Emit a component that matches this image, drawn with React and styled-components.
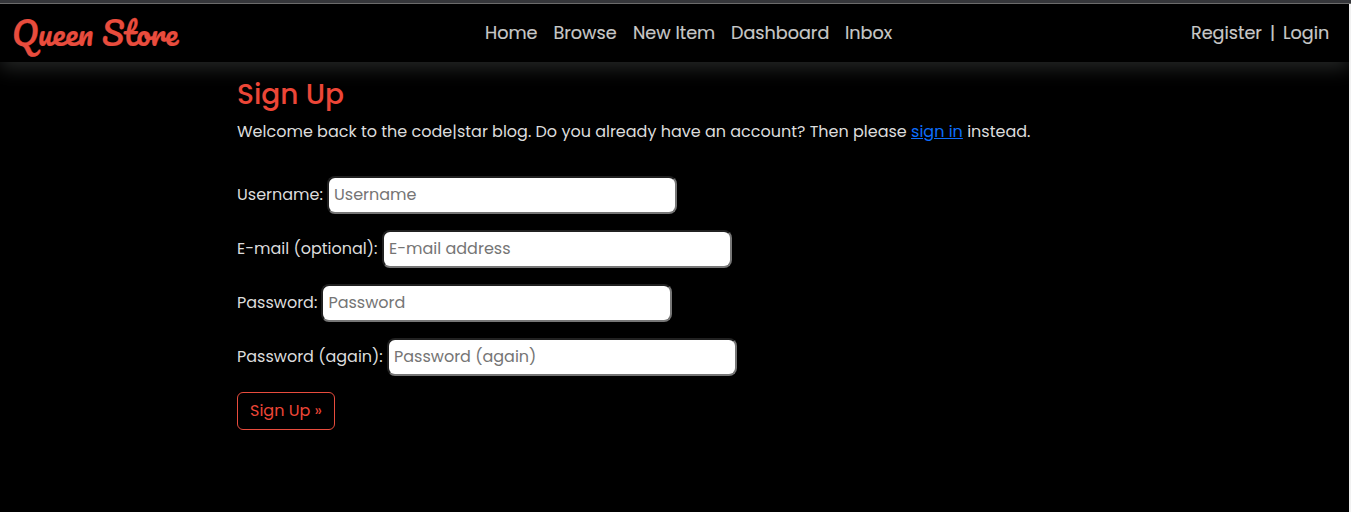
import React from "react";
import styled, { createGlobalStyle } from "styled-components";

const GlobalStyle = createGlobalStyle`
  * { box-sizing: border-box; }
  body {
    margin: 0;
    background: #000;
    color: #dcdcdc;
    font: 400 16px/24px Poppins, Inter, sans-serif;
    overflow: hidden;
  }
`;

const Page = styled.div`
  height: 512px;
  background: #000;
  display: flex;
  flex-direction: column;
`;

const TopEdge = styled.div`
  flex: none;
  height: 4px;
  background: #35363a;
  border-bottom: 1px solid #6b6b6b;
`;

const Body = styled.div`
  flex: 1;
  border-right: 2px solid #f1f1f1;
  overflow: hidden;
`;

const Header = styled.header`
  height: 58px;
  padding: 0 19px 0 12px;
  display: grid;
  grid-template-columns: 473px 1fr auto;
  align-items: center;
  background: #000;
  box-shadow: 0 6px 18px rgba(84, 88, 86, 0.45);
`;

const Logo = styled.a`
  padding-bottom: 2px;
  color: #e84c3d;
  font: 400 32px/56px Pacifico, "Liberation Serif", cursive;
  -webkit-text-stroke: 0.2px currentColor;
  white-space: nowrap;
`;

const Nav = styled.nav`
  display: flex;
  gap: 16px;
`;

const NavLink = styled.a`
  width: ${(p) => p.$width}px;
  color: #c8c8c8;
  font-size: 17.6px;
  line-height: 26px;
  -webkit-text-stroke: 0.15px currentColor;
  white-space: nowrap;
`;

const Account = styled.div`
  display: flex;
  gap: 8px;
`;

const Main = styled.main`
  padding: 16px 0 0 237px;
`;

const Title = styled.h1`
  margin: 0 0 8px;
  color: #ec4637;
  font-size: 28px;
  font-weight: 500;
  line-height: 34px;
`;

const Intro = styled.p`
  margin: 0 0 32px;
  white-space: nowrap;
`;

const Link = styled.a`
  color: #0d6efd;
  text-decoration: underline;
`;

const Field = styled.div`
  height: 38px;
  margin-bottom: 16px;
  display: flex;
  align-items: center;
`;

const Label = styled.label`
  width: ${(p) => p.$width}px;
  white-space: nowrap;
`;

const Input = styled.input`
  width: ${(p) => p.$width || 350}px;
  height: 38px;
  padding: 0 5px 2px;
  border: 2px solid;
  border-color: #212121 #767676 #767676 #212121;
  border-radius: 8px;
  background: #fff;
  font: inherit;
  &::placeholder { color: #757575; opacity: 1; }
`;

const Button = styled.button`
  width: 98px;
  height: 38px;
  padding: 0;
  border: 1px solid #e84c3d;
  border-radius: 6px;
  background: transparent;
  color: #ec4637;
  font: inherit;
`;

const links = [
  { text: "Home", width: 52.5 },
  { text: "Browse", width: 63.5 },
  { text: "New Item", width: 82 },
  { text: "Dashboard", width: 98 },
  { text: "Inbox", width: 48 },
];

const fields = [
  { label: "Username:", hint: "Username", width: 90 },
  { label: "E-mail (optional):", hint: "E-mail address", width: 145 },
  { label: "Password:", hint: "Password", width: 84.4, inputWidth: 350.6 },
  { label: "Password (again):", hint: "Password (again)", width: 150 },
];

export default function App() {
  return (
    <Page>
      <GlobalStyle />
      <TopEdge />
      <Body>
        <Header>
          <Logo>Queen Store</Logo>
          <Nav>
            {links.map((l) => (
              <NavLink key={l.text} $width={l.width}>{l.text}</NavLink>
            ))}
          </Nav>
          <Account>
            <NavLink $width={71}>Register</NavLink>
            <NavLink $width={5}>|</NavLink>
            <NavLink $width={47}>Login</NavLink>
          </Account>
        </Header>
        <Main>
          <Title>Sign Up</Title>
          <Intro>
            Welcome back to the code|star blog. Do you already have an account? Then please{" "}
            <Link>sign in</Link> instead.
          </Intro>
          {fields.map((f) => (
            <Field key={f.label}>
              <Label $width={f.width}>{f.label}</Label>
              <Input placeholder={f.hint} $width={f.inputWidth} />
            </Field>
          ))}
          <Button>Sign Up »</Button>
        </Main>
      </Body>
    </Page>
  );
}
